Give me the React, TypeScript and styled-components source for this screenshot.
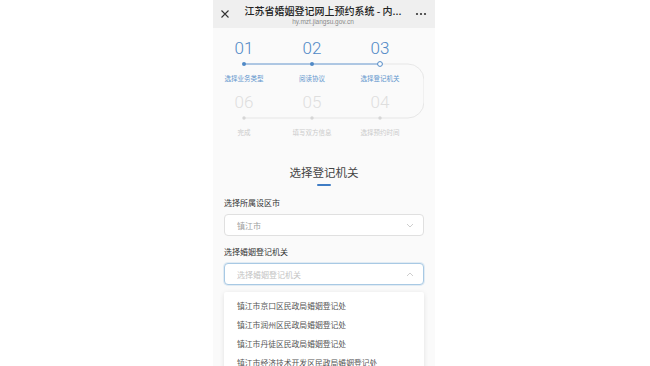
import React from 'react';
import styled, { createGlobalStyle } from 'styled-components';

const GlobalStyle = createGlobalStyle`
  html, body {
    margin: 0;
    padding: 0;
    background: #ffffff;
  }
  body {
    font-family: "Noto Sans CJK SC", "Noto Sans", sans-serif;
  }
`;

const Page = styled.div`
  width: 650px;
  height: 366px;
  display: flex;
  justify-content: center;
  overflow: hidden;
  background: #ffffff;
`;

const Phone = styled.div`
  width: 222px;
  height: 366px;
  margin-left: -2px;
  background: #fafafa;
  display: flex;
  flex-direction: column;
  position: relative;
`;

const TopBar = styled.header`
  height: 28px;
  background: #efefef;
  display: flex;
  align-items: center;
  padding: 0 8px 0 6px;
  box-sizing: border-box;
`;

const BarButton = styled.div`
  width: 12px;
  display: flex;
  align-items: center;
  justify-content: center;
  color: #333;
`;

const TitleBlock = styled.div`
  flex: 1;
  display: flex;
  flex-direction: column;
  align-items: center;
  min-width: 0;
  padding-top: 1px;
`;

const PageTitle = styled.div`
  font-size: 10px;
  line-height: 13px;
  font-weight: 500;
  color: #222;
  white-space: nowrap;
`;

const PageUrl = styled.div`
  font-family: "Liberation Sans", Arial, sans-serif;
  font-size: 6.5px;
  line-height: 9px;
  color: #8a8a8a;
`;

const Content = styled.div`
  padding: 8px 11px 0;
  display: flex;
  flex-direction: column;
`;

const Stepper = styled.div`
  position: relative;
  height: 102px;
  display: grid;
  grid-template-columns: repeat(3, 40px);
  grid-auto-rows: 48px;
  column-gap: 28px;
  row-gap: 6px;
`;

const Connector = styled.svg`
  position: absolute;
  left: 0;
  top: 0;
  width: 200px;
  height: 102px;
  pointer-events: none;
`;

const Step = styled.div<{ $active: boolean }>`
  display: flex;
  flex-direction: column;
  align-items: center;
  position: relative;
  color: ${(p) => (p.$active ? '#5089c6' : '#dedede')};
`;

const StepNum = styled.div`
  font-family: Roboto, "Noto Sans", sans-serif;
  font-weight: 300;
  font-size: 17px;
  line-height: 24px;
  height: 24px;
`;

const DotSlot = styled.div`
  height: 8px;
`;

const StepLabel = styled.div<{ $active: boolean }>`
  margin-top: 4px;
  font-size: 6.5px;
  line-height: 12px;
  white-space: nowrap;
  color: ${(p) => (p.$active ? '#6296cd' : '#cbcbcb')};
`;

const Heading = styled.div`
  margin-top: 26px;
  display: flex;
  flex-direction: column;
  align-items: center;
`;

const HeadingText = styled.div`
  font-size: 11.5px;
  line-height: 17px;
  color: #444;
`;

const HeadingBar = styled.div`
  width: 14px;
  height: 2px;
  margin-top: 3px;
  border-radius: 1px;
  background: #3f7cc4;
`;

const FieldLabel = styled.div<{ $top: number }>`
  margin-top: ${(p) => p.$top}px;
  font-size: 8px;
  line-height: 12px;
  color: #333;
`;

const FieldWrap = styled.div`
  position: relative;
  margin-top: 5px;
`;

const SelectBox = styled.div<{ $focus?: boolean }>`
  height: 22px;
  box-sizing: border-box;
  border: 1px solid ${(p) => (p.$focus ? '#a8c9e4' : '#e0e0e0')};
  border-radius: 4px;
  background: #ffffff;
  display: flex;
  align-items: center;
  justify-content: space-between;
  padding: 0 9px 0 12px;
  box-shadow: ${(p) => (p.$focus ? '0 0 0 1px rgba(150,190,225,0.25)' : 'none')};
`;

const SelectText = styled.span<{ $placeholder?: boolean }>`
  font-size: 8px;
  color: ${(p) => (p.$placeholder ? '#c4c4c4' : '#a0a0a0')};
`;

const Menu = styled.ul`
  position: absolute;
  left: 0;
  right: 0;
  top: 29px;
  margin: 0;
  padding: 4px 0 0;
  list-style: none;
  background: #ffffff;
  box-shadow: 0 1px 5px rgba(0, 0, 0, 0.1);
  border-radius: 2px;
  height: 90px;
  box-sizing: border-box;
`;

const MenuItem = styled.li`
  height: 19px;
  line-height: 19px;
  padding-left: 13px;
  font-size: 7.8px;
  color: #555;
  white-space: nowrap;
`;

const Chevron: React.FC<{ up?: boolean }> = ({ up }) => (
  <svg width="8" height="5" viewBox="0 0 8 5">
    <path
      d={up ? 'M1 4 L4 1 L7 4' : 'M1 1 L4 4 L7 1'}
      fill="none"
      stroke="#c8c8c8"
      strokeWidth="0.9"
    />
  </svg>
);

const steps = [
  { num: '01', label: '选择业务类型', active: true },
  { num: '02', label: '阅读协议', active: true },
  { num: '03', label: '选择登记机关', active: true },
  { num: '06', label: '完成', active: false },
  { num: '05', label: '填写双方信息', active: false },
  { num: '04', label: '选择预约时间', active: false },
];

const offices = [
  '镇江市京口区民政局婚姻登记处',
  '镇江市润州区民政局婚姻登记处',
  '镇江市丹徒区民政局婚姻登记处',
  '镇江市经济技术开发区民政局婚姻登记处',
];

const App: React.FC = () => {
  return (
    <Page>
      <GlobalStyle />
      <Phone>
        <TopBar>
          <BarButton>
            <svg width="10" height="10" viewBox="0 0 10 10">
              <path d="M1.5 1.5 L8.5 8.5 M8.5 1.5 L1.5 8.5" stroke="#333" strokeWidth="1.1" />
            </svg>
          </BarButton>
          <TitleBlock>
            <PageTitle>江苏省婚姻登记网上预约系统 - 内...</PageTitle>
            <PageUrl>hy.mzt.jiangsu.gov.cn</PageUrl>
          </TitleBlock>
          <BarButton>
            <svg width="12" height="4" viewBox="0 0 12 4">
              <circle cx="2" cy="2" r="1.1" fill="#333" />
              <circle cx="6" cy="2" r="1.1" fill="#333" />
              <circle cx="10" cy="2" r="1.1" fill="#333" />
            </svg>
          </BarButton>
        </TopBar>

        <Content>
          <Stepper>
            <Connector viewBox="0 0 200 102">
              <path
                d="M156 28 H184 A16 16 0 0 1 200 44 V66 A16 16 0 0 1 184 82 H20"
                fill="none"
                stroke="#e4e4e4"
                strokeWidth="0.9"
              />
              <path d="M20 28 H156" fill="none" stroke="#5089c6" strokeWidth="0.9" />
              <circle cx="20" cy="28" r="2" fill="#5089c6" />
              <circle cx="88" cy="28" r="2" fill="#5089c6" />
              <circle cx="156" cy="28" r="2.4" fill="#ffffff" stroke="#5089c6" strokeWidth="1" />
              <circle cx="20" cy="82" r="1.7" fill="#d6d6d6" />
              <circle cx="88" cy="82" r="1.7" fill="#d6d6d6" />
              <circle cx="156" cy="82" r="1.7" fill="#d6d6d6" />
            </Connector>
            {steps.map((s) => (
              <Step key={s.num} $active={s.active}>
                <StepNum>{s.num}</StepNum>
                <DotSlot />
                <StepLabel $active={s.active}>{s.label}</StepLabel>
              </Step>
            ))}
          </Stepper>

          <Heading>
            <HeadingText>选择登记机关</HeadingText>
            <HeadingBar />
          </Heading>

          <FieldLabel $top={11}>选择所属设区市</FieldLabel>
          <FieldWrap>
            <SelectBox>
              <SelectText>镇江市</SelectText>
              <Chevron />
            </SelectBox>
          </FieldWrap>

          <FieldLabel $top={10}>选择婚姻登记机关</FieldLabel>
          <FieldWrap>
            <SelectBox $focus>
              <SelectText $placeholder>选择婚姻登记机关</SelectText>
              <Chevron up />
            </SelectBox>
            <Menu>
              {offices.map((o) => (
                <MenuItem key={o}>{o}</MenuItem>
              ))}
            </Menu>
          </FieldWrap>
        </Content>
      </Phone>
    </Page>
  );
};

export default App;
